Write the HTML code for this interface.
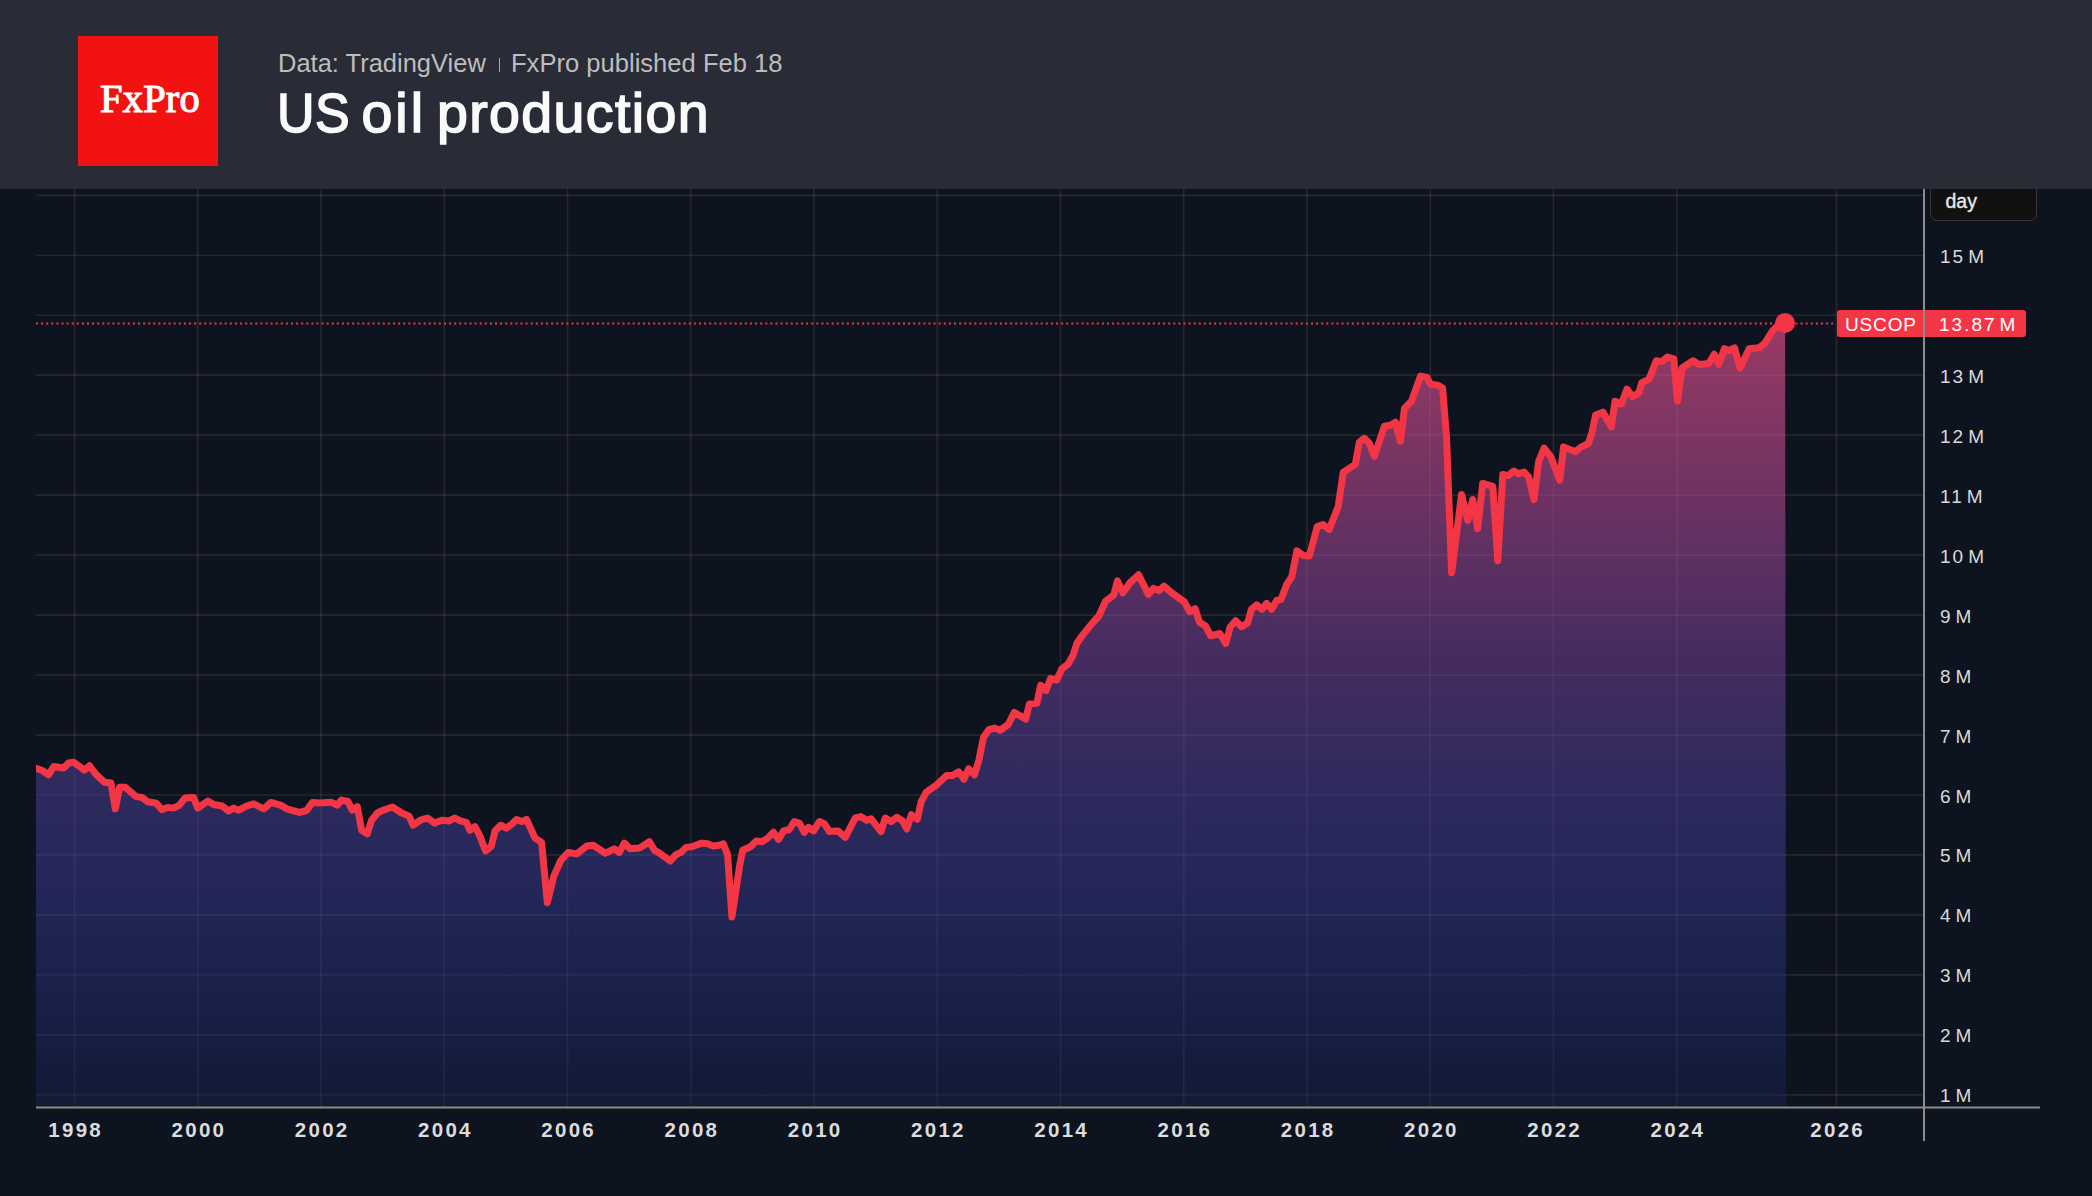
<!DOCTYPE html>
<html><head><meta charset="utf-8">
<style>
html,body{margin:0;padding:0;}
body{width:2092px;height:1196px;overflow:hidden;background:#0e1320;position:relative;font-family:"Liberation Sans",sans-serif;}
#hdr{position:absolute;left:0;top:0;width:2092px;height:189px;background:#292b36;z-index:5;}
#logo{position:absolute;left:78px;top:36px;width:140px;height:129.5px;background:#f21212;}
#logo span{position:absolute;left:2px;top:-2.5px;width:140px;text-align:center;font-family:"Liberation Serif",serif;font-weight:normal;font-size:40.5px;line-height:129px;color:#fff;letter-spacing:0.2px;-webkit-text-stroke:1.1px #fff;}
#sub{position:absolute;left:278px;top:45.9px;font-size:26.5px;line-height:34px;color:#bdbdbd;white-space:nowrap;transform-origin:0 0;transform:scaleX(0.962);}
#sep{position:absolute;left:498.6px;top:58px;width:1.6px;height:13.5px;background:#a8a8a8;}
#sub2{position:absolute;left:511px;top:45.9px;font-size:26.5px;line-height:34px;color:#bdbdbd;white-space:nowrap;transform-origin:0 0;transform:scaleX(0.965);}
#title{position:absolute;left:277px;top:80.8px;font-size:55.5px;line-height:64px;color:#fafafa;white-space:nowrap;-webkit-text-stroke:1.6px #fafafa;letter-spacing:0.55px;}
.w{position:absolute;top:0;transform-origin:0 0;}
svg{position:absolute;left:0;top:0;}
#vax{position:absolute;left:1922.8px;top:188px;width:2px;height:953px;background:#8e8c88;}
.yl{position:absolute;left:1940px;height:22px;line-height:22px;font-size:19px;color:#d9d9d9;white-space:nowrap;letter-spacing:2px;}
.sp{display:inline-block;width:3px;}
.xl{position:absolute;top:1116px;width:80px;text-align:center;font-size:20.5px;line-height:28px;font-weight:bold;color:#dcdcdc;letter-spacing:2.3px;text-indent:2.3px;}
#day{position:absolute;left:1929.5px;top:168px;width:107px;height:53px;background:#111111;border:1.5px solid #38383a;border-radius:7px;box-sizing:border-box;}
#dayt{position:absolute;left:1945.5px;top:188.5px;font-size:19.5px;line-height:24px;color:#e8e8e8;-webkit-text-stroke:0.35px #e8e8e8;}
.lab{position:absolute;top:310px;height:27px;line-height:29px;background:#f23645;color:#fff;font-size:19px;white-space:nowrap;letter-spacing:1.5px;}
</style></head><body>
<svg width="2092" height="1196" viewBox="0 0 2092 1196">
<defs>
<linearGradient id="g" x1="0" y1="323" x2="0" y2="1107" gradientUnits="userSpaceOnUse">
<stop offset="0" stop-color="#9a3a64"/>
<stop offset="0.22" stop-color="#6e3262"/>
<stop offset="0.42" stop-color="#462c60"/>
<stop offset="0.6" stop-color="#2e2a5e"/>
<stop offset="0.7" stop-color="#252759"/>
<stop offset="0.8" stop-color="#1c2350"/>
<stop offset="0.9" stop-color="#161e43"/>
<stop offset="1" stop-color="#121a35"/>
</linearGradient>
<clipPath id="ca"><path d="M36 768.4 L42.9 770.8 L48.6 774.8 L53.7 766.5 L63.7 768 L68.7 763 L73.7 762.2 L84.5 770.1 L89.5 765.8 L96 774.4 L104.6 782.3 L111 783 L115.3 808.8 L119.6 787.3 L125.4 787.3 L136.1 796.6 L141.9 797.4 L147.6 801.7 L156.2 803.1 L161.9 809.6 L167.7 807.4 L173.4 808.1 L179.2 805.3 L184.9 798.1 L193.5 797.4 L197.8 808.1 L207.8 801 L213.6 804.5 L222.2 806 L228.6 811 L233.6 808.1 L238.7 810.3 L246.5 806 L253.7 803.8 L263.8 808.8 L270.9 802.4 L281 805.3 L286.7 808.8 L299.6 812.4 L306.8 810.3 L312.5 802.4 L319.7 803.1 L331.5 802.3 L337.2 805.1 L341.5 800.1 L348 801.5 L352.3 810.2 L357.3 806.6 L361.6 830.2 L367.3 833.8 L371.6 820.2 L377.4 813 L383.1 810.2 L392.4 807 L401.7 813 L408.9 815.9 L413.2 825.2 L420.4 820.2 L427.6 818 L434.7 823.1 L441.9 820.2 L449.1 820.9 L454.8 818 L460.5 820.9 L466.3 822.3 L469.9 830.2 L474.9 826.6 L479.9 836 L485.6 851 L491.4 846 L495 831 L500.7 825.2 L506.4 828.1 L512.2 823.8 L516.5 819.5 L522.2 821.6 L526.5 819.5 L535.1 838.1 L541.6 842.4 L547.3 902.7 L553.8 876.1 L560.9 860.3 L568.1 852.5 L576.7 853.9 L586.7 846 L593.2 845.3 L605.4 853.2 L614.3 848.8 L619.3 852.4 L624.3 843.1 L630.1 848.8 L639.4 848.1 L649.4 841.7 L654.5 850.3 L659.5 853.1 L670.2 861 L676 854.6 L681 852.4 L686 847.4 L691.7 846.7 L701.8 843.1 L707.5 843.8 L713.3 846 L719 845.3 L723.3 843.8 L727.6 854.6 L731.9 917 L736.2 889 L739.8 864.6 L742.7 850.3 L750.5 846.7 L756.3 841 L762 841.7 L767.7 838.1 L773.5 832.3 L778.5 839.5 L783.5 830.9 L789.3 829.5 L794.3 821.6 L799.3 823 L804.3 832.3 L808.6 827.3 L813.6 830.9 L819.4 821.6 L824.4 823.7 L829.4 831.6 L838 830.9 L845.2 837.4 L855.2 818 L861 816.6 L866.7 820.2 L871 818.7 L881 831.6 L885.3 818 L891.1 821.6 L896.8 817.3 L902.6 820.9 L906.8 829 L911.3 814.7 L917.3 819.2 L921.1 801.9 L926.3 792.1 L936.1 785.3 L946.6 775.5 L952.7 775.5 L958.7 771.8 L963.9 779.3 L968.5 768.8 L974.5 774.8 L979 759.7 L983.5 737.2 L988.8 729.7 L994.8 728.1 L1000.1 730.4 L1008.3 724.4 L1014.4 712.4 L1025.6 719.1 L1029.4 704.1 L1036.9 703.3 L1040.7 685.3 L1046 690.5 L1050.5 678.6 L1056.6 680.2 L1061.8 668.9 L1067.8 664.4 L1073.1 655.3 L1076.9 643.3 L1082.1 635.8 L1091.9 623.7 L1098.7 616.2 L1105.5 601.2 L1113.7 595.1 L1117.5 580.8 L1122.8 592.9 L1130.3 582.4 L1138.6 574.8 L1148.3 594.4 L1153.6 588.4 L1158.9 590.6 L1164.1 586.1 L1170.9 592.1 L1184.4 601.9 L1189.7 611.7 L1195 608.7 L1199.5 622.2 L1205.5 626 L1210.8 635.8 L1219.8 633.5 L1225.8 643.3 L1230.3 626.7 L1235.6 620.7 L1241.6 626.7 L1247.6 623 L1251.4 609.4 L1256.7 604.9 L1261.9 609.4 L1266.5 603.4 L1271.7 609.4 L1276.8 600.2 L1281 599.4 L1286.8 584.3 L1291.8 576.8 L1296.9 550.9 L1303.5 555.5 L1309.4 555.9 L1317.2 526.6 L1323.2 524.6 L1329.2 529.6 L1338.2 506.5 L1343.2 472.4 L1355.3 464.4 L1359.3 442.3 L1364.3 438.3 L1369.3 443.3 L1374.4 456.3 L1384.4 426.2 L1390.4 425.2 L1395.4 422.2 L1400.4 441.3 L1404.5 408.2 L1411.5 401.1 L1420.5 376.1 L1426.5 377.1 L1430.5 384.1 L1437.6 385.1 L1442.6 388.1 L1446.6 438.3 L1451.6 572.7 L1461.6 494.5 L1467.7 520.5 L1472.7 499.5 L1477.7 528.6 L1482.7 483.4 L1492.8 486.4 L1497.8 560.7 L1502.8 474.4 L1508.3 475.6 L1513.8 471 L1518.4 473.8 L1523.9 472 L1528.5 476.6 L1534 499.6 L1538.6 461.9 L1544.1 448.1 L1550.6 456.3 L1559.8 480.2 L1563.5 447.1 L1575.4 451.7 L1580.9 447.1 L1588.3 443.5 L1592 432.4 L1595.6 415 L1603 412.2 L1611.3 426.9 L1615 401.2 L1621.4 403.9 L1626.9 389.2 L1632.4 396.6 L1638.9 392.9 L1641.6 382.8 L1649 379.1 L1656.3 360.7 L1661.9 361.6 L1667.4 357 L1673.8 358.9 L1677.5 401.2 L1682.1 368 L1693.1 360.7 L1698.6 364.4 L1708.8 363.5 L1714.3 354.3 L1718.9 364.4 L1724.4 348.7 L1729 350.6 L1734.5 347.8 L1740 368 L1749.2 348.7 L1759.3 347.8 L1764.9 343.2 L1772.2 331.3 L1777.7 325.7 L1785.1 323 L1786 1107 L36 1107 Z"/></clipPath>
<clipPath id="c"><rect x="36" y="188" width="1900" height="920"/></clipPath>
</defs>
<g stroke="rgba(220,185,110,0.12)" stroke-width="1.7" fill="none">
<line x1="36" y1="195.30" x2="1924" y2="195.30"/>
<line x1="36" y1="255.27" x2="1924" y2="255.27"/>
<line x1="36" y1="315.24" x2="1924" y2="315.24"/>
<line x1="36" y1="375.21" x2="1924" y2="375.21"/>
<line x1="36" y1="435.18" x2="1924" y2="435.18"/>
<line x1="36" y1="495.15" x2="1924" y2="495.15"/>
<line x1="36" y1="555.12" x2="1924" y2="555.12"/>
<line x1="36" y1="615.09" x2="1924" y2="615.09"/>
<line x1="36" y1="675.06" x2="1924" y2="675.06"/>
<line x1="36" y1="735.03" x2="1924" y2="735.03"/>
<line x1="36" y1="795.00" x2="1924" y2="795.00"/>
<line x1="36" y1="854.97" x2="1924" y2="854.97"/>
<line x1="36" y1="914.94" x2="1924" y2="914.94"/>
<line x1="36" y1="974.91" x2="1924" y2="974.91"/>
<line x1="36" y1="1034.88" x2="1924" y2="1034.88"/>
<line x1="36" y1="1094.85" x2="1924" y2="1094.85"/>
<line x1="74.50" y1="188" x2="74.50" y2="1107"/>
<line x1="197.75" y1="188" x2="197.75" y2="1107"/>
<line x1="321.00" y1="188" x2="321.00" y2="1107"/>
<line x1="444.25" y1="188" x2="444.25" y2="1107"/>
<line x1="567.50" y1="188" x2="567.50" y2="1107"/>
<line x1="690.75" y1="188" x2="690.75" y2="1107"/>
<line x1="814.00" y1="188" x2="814.00" y2="1107"/>
<line x1="937.25" y1="188" x2="937.25" y2="1107"/>
<line x1="1060.50" y1="188" x2="1060.50" y2="1107"/>
<line x1="1183.75" y1="188" x2="1183.75" y2="1107"/>
<line x1="1307.00" y1="188" x2="1307.00" y2="1107"/>
<line x1="1430.25" y1="188" x2="1430.25" y2="1107"/>
<line x1="1553.50" y1="188" x2="1553.50" y2="1107"/>
<line x1="1676.75" y1="188" x2="1676.75" y2="1107"/>
<line x1="1836.50" y1="188" x2="1836.50" y2="1107"/>
</g>
<path d="M36 768.4 L42.9 770.8 L48.6 774.8 L53.7 766.5 L63.7 768 L68.7 763 L73.7 762.2 L84.5 770.1 L89.5 765.8 L96 774.4 L104.6 782.3 L111 783 L115.3 808.8 L119.6 787.3 L125.4 787.3 L136.1 796.6 L141.9 797.4 L147.6 801.7 L156.2 803.1 L161.9 809.6 L167.7 807.4 L173.4 808.1 L179.2 805.3 L184.9 798.1 L193.5 797.4 L197.8 808.1 L207.8 801 L213.6 804.5 L222.2 806 L228.6 811 L233.6 808.1 L238.7 810.3 L246.5 806 L253.7 803.8 L263.8 808.8 L270.9 802.4 L281 805.3 L286.7 808.8 L299.6 812.4 L306.8 810.3 L312.5 802.4 L319.7 803.1 L331.5 802.3 L337.2 805.1 L341.5 800.1 L348 801.5 L352.3 810.2 L357.3 806.6 L361.6 830.2 L367.3 833.8 L371.6 820.2 L377.4 813 L383.1 810.2 L392.4 807 L401.7 813 L408.9 815.9 L413.2 825.2 L420.4 820.2 L427.6 818 L434.7 823.1 L441.9 820.2 L449.1 820.9 L454.8 818 L460.5 820.9 L466.3 822.3 L469.9 830.2 L474.9 826.6 L479.9 836 L485.6 851 L491.4 846 L495 831 L500.7 825.2 L506.4 828.1 L512.2 823.8 L516.5 819.5 L522.2 821.6 L526.5 819.5 L535.1 838.1 L541.6 842.4 L547.3 902.7 L553.8 876.1 L560.9 860.3 L568.1 852.5 L576.7 853.9 L586.7 846 L593.2 845.3 L605.4 853.2 L614.3 848.8 L619.3 852.4 L624.3 843.1 L630.1 848.8 L639.4 848.1 L649.4 841.7 L654.5 850.3 L659.5 853.1 L670.2 861 L676 854.6 L681 852.4 L686 847.4 L691.7 846.7 L701.8 843.1 L707.5 843.8 L713.3 846 L719 845.3 L723.3 843.8 L727.6 854.6 L731.9 917 L736.2 889 L739.8 864.6 L742.7 850.3 L750.5 846.7 L756.3 841 L762 841.7 L767.7 838.1 L773.5 832.3 L778.5 839.5 L783.5 830.9 L789.3 829.5 L794.3 821.6 L799.3 823 L804.3 832.3 L808.6 827.3 L813.6 830.9 L819.4 821.6 L824.4 823.7 L829.4 831.6 L838 830.9 L845.2 837.4 L855.2 818 L861 816.6 L866.7 820.2 L871 818.7 L881 831.6 L885.3 818 L891.1 821.6 L896.8 817.3 L902.6 820.9 L906.8 829 L911.3 814.7 L917.3 819.2 L921.1 801.9 L926.3 792.1 L936.1 785.3 L946.6 775.5 L952.7 775.5 L958.7 771.8 L963.9 779.3 L968.5 768.8 L974.5 774.8 L979 759.7 L983.5 737.2 L988.8 729.7 L994.8 728.1 L1000.1 730.4 L1008.3 724.4 L1014.4 712.4 L1025.6 719.1 L1029.4 704.1 L1036.9 703.3 L1040.7 685.3 L1046 690.5 L1050.5 678.6 L1056.6 680.2 L1061.8 668.9 L1067.8 664.4 L1073.1 655.3 L1076.9 643.3 L1082.1 635.8 L1091.9 623.7 L1098.7 616.2 L1105.5 601.2 L1113.7 595.1 L1117.5 580.8 L1122.8 592.9 L1130.3 582.4 L1138.6 574.8 L1148.3 594.4 L1153.6 588.4 L1158.9 590.6 L1164.1 586.1 L1170.9 592.1 L1184.4 601.9 L1189.7 611.7 L1195 608.7 L1199.5 622.2 L1205.5 626 L1210.8 635.8 L1219.8 633.5 L1225.8 643.3 L1230.3 626.7 L1235.6 620.7 L1241.6 626.7 L1247.6 623 L1251.4 609.4 L1256.7 604.9 L1261.9 609.4 L1266.5 603.4 L1271.7 609.4 L1276.8 600.2 L1281 599.4 L1286.8 584.3 L1291.8 576.8 L1296.9 550.9 L1303.5 555.5 L1309.4 555.9 L1317.2 526.6 L1323.2 524.6 L1329.2 529.6 L1338.2 506.5 L1343.2 472.4 L1355.3 464.4 L1359.3 442.3 L1364.3 438.3 L1369.3 443.3 L1374.4 456.3 L1384.4 426.2 L1390.4 425.2 L1395.4 422.2 L1400.4 441.3 L1404.5 408.2 L1411.5 401.1 L1420.5 376.1 L1426.5 377.1 L1430.5 384.1 L1437.6 385.1 L1442.6 388.1 L1446.6 438.3 L1451.6 572.7 L1461.6 494.5 L1467.7 520.5 L1472.7 499.5 L1477.7 528.6 L1482.7 483.4 L1492.8 486.4 L1497.8 560.7 L1502.8 474.4 L1508.3 475.6 L1513.8 471 L1518.4 473.8 L1523.9 472 L1528.5 476.6 L1534 499.6 L1538.6 461.9 L1544.1 448.1 L1550.6 456.3 L1559.8 480.2 L1563.5 447.1 L1575.4 451.7 L1580.9 447.1 L1588.3 443.5 L1592 432.4 L1595.6 415 L1603 412.2 L1611.3 426.9 L1615 401.2 L1621.4 403.9 L1626.9 389.2 L1632.4 396.6 L1638.9 392.9 L1641.6 382.8 L1649 379.1 L1656.3 360.7 L1661.9 361.6 L1667.4 357 L1673.8 358.9 L1677.5 401.2 L1682.1 368 L1693.1 360.7 L1698.6 364.4 L1708.8 363.5 L1714.3 354.3 L1718.9 364.4 L1724.4 348.7 L1729 350.6 L1734.5 347.8 L1740 368 L1749.2 348.7 L1759.3 347.8 L1764.9 343.2 L1772.2 331.3 L1777.7 325.7 L1785.1 323 L1786 1107 L36 1107 Z" fill="url(#g)"/>
<g stroke="rgba(210,190,200,0.075)" stroke-width="1.7" fill="none" clip-path="url(#ca)">
<line x1="36" y1="195.30" x2="1924" y2="195.30"/>
<line x1="36" y1="255.27" x2="1924" y2="255.27"/>
<line x1="36" y1="315.24" x2="1924" y2="315.24"/>
<line x1="36" y1="375.21" x2="1924" y2="375.21"/>
<line x1="36" y1="435.18" x2="1924" y2="435.18"/>
<line x1="36" y1="495.15" x2="1924" y2="495.15"/>
<line x1="36" y1="555.12" x2="1924" y2="555.12"/>
<line x1="36" y1="615.09" x2="1924" y2="615.09"/>
<line x1="36" y1="675.06" x2="1924" y2="675.06"/>
<line x1="36" y1="735.03" x2="1924" y2="735.03"/>
<line x1="36" y1="795.00" x2="1924" y2="795.00"/>
<line x1="36" y1="854.97" x2="1924" y2="854.97"/>
<line x1="36" y1="914.94" x2="1924" y2="914.94"/>
<line x1="36" y1="974.91" x2="1924" y2="974.91"/>
<line x1="36" y1="1034.88" x2="1924" y2="1034.88"/>
<line x1="36" y1="1094.85" x2="1924" y2="1094.85"/>
<line x1="74.50" y1="188" x2="74.50" y2="1107"/>
<line x1="197.75" y1="188" x2="197.75" y2="1107"/>
<line x1="321.00" y1="188" x2="321.00" y2="1107"/>
<line x1="444.25" y1="188" x2="444.25" y2="1107"/>
<line x1="567.50" y1="188" x2="567.50" y2="1107"/>
<line x1="690.75" y1="188" x2="690.75" y2="1107"/>
<line x1="814.00" y1="188" x2="814.00" y2="1107"/>
<line x1="937.25" y1="188" x2="937.25" y2="1107"/>
<line x1="1060.50" y1="188" x2="1060.50" y2="1107"/>
<line x1="1183.75" y1="188" x2="1183.75" y2="1107"/>
<line x1="1307.00" y1="188" x2="1307.00" y2="1107"/>
<line x1="1430.25" y1="188" x2="1430.25" y2="1107"/>
<line x1="1553.50" y1="188" x2="1553.50" y2="1107"/>
<line x1="1676.75" y1="188" x2="1676.75" y2="1107"/>
<line x1="1836.50" y1="188" x2="1836.50" y2="1107"/>
</g>
<line x1="36" y1="323.5" x2="1836" y2="323.5" stroke="#f23645" stroke-width="2" stroke-dasharray="2 3.1"/>
<path d="M36 768.4 L42.9 770.8 L48.6 774.8 L53.7 766.5 L63.7 768 L68.7 763 L73.7 762.2 L84.5 770.1 L89.5 765.8 L96 774.4 L104.6 782.3 L111 783 L115.3 808.8 L119.6 787.3 L125.4 787.3 L136.1 796.6 L141.9 797.4 L147.6 801.7 L156.2 803.1 L161.9 809.6 L167.7 807.4 L173.4 808.1 L179.2 805.3 L184.9 798.1 L193.5 797.4 L197.8 808.1 L207.8 801 L213.6 804.5 L222.2 806 L228.6 811 L233.6 808.1 L238.7 810.3 L246.5 806 L253.7 803.8 L263.8 808.8 L270.9 802.4 L281 805.3 L286.7 808.8 L299.6 812.4 L306.8 810.3 L312.5 802.4 L319.7 803.1 L331.5 802.3 L337.2 805.1 L341.5 800.1 L348 801.5 L352.3 810.2 L357.3 806.6 L361.6 830.2 L367.3 833.8 L371.6 820.2 L377.4 813 L383.1 810.2 L392.4 807 L401.7 813 L408.9 815.9 L413.2 825.2 L420.4 820.2 L427.6 818 L434.7 823.1 L441.9 820.2 L449.1 820.9 L454.8 818 L460.5 820.9 L466.3 822.3 L469.9 830.2 L474.9 826.6 L479.9 836 L485.6 851 L491.4 846 L495 831 L500.7 825.2 L506.4 828.1 L512.2 823.8 L516.5 819.5 L522.2 821.6 L526.5 819.5 L535.1 838.1 L541.6 842.4 L547.3 902.7 L553.8 876.1 L560.9 860.3 L568.1 852.5 L576.7 853.9 L586.7 846 L593.2 845.3 L605.4 853.2 L614.3 848.8 L619.3 852.4 L624.3 843.1 L630.1 848.8 L639.4 848.1 L649.4 841.7 L654.5 850.3 L659.5 853.1 L670.2 861 L676 854.6 L681 852.4 L686 847.4 L691.7 846.7 L701.8 843.1 L707.5 843.8 L713.3 846 L719 845.3 L723.3 843.8 L727.6 854.6 L731.9 917 L736.2 889 L739.8 864.6 L742.7 850.3 L750.5 846.7 L756.3 841 L762 841.7 L767.7 838.1 L773.5 832.3 L778.5 839.5 L783.5 830.9 L789.3 829.5 L794.3 821.6 L799.3 823 L804.3 832.3 L808.6 827.3 L813.6 830.9 L819.4 821.6 L824.4 823.7 L829.4 831.6 L838 830.9 L845.2 837.4 L855.2 818 L861 816.6 L866.7 820.2 L871 818.7 L881 831.6 L885.3 818 L891.1 821.6 L896.8 817.3 L902.6 820.9 L906.8 829 L911.3 814.7 L917.3 819.2 L921.1 801.9 L926.3 792.1 L936.1 785.3 L946.6 775.5 L952.7 775.5 L958.7 771.8 L963.9 779.3 L968.5 768.8 L974.5 774.8 L979 759.7 L983.5 737.2 L988.8 729.7 L994.8 728.1 L1000.1 730.4 L1008.3 724.4 L1014.4 712.4 L1025.6 719.1 L1029.4 704.1 L1036.9 703.3 L1040.7 685.3 L1046 690.5 L1050.5 678.6 L1056.6 680.2 L1061.8 668.9 L1067.8 664.4 L1073.1 655.3 L1076.9 643.3 L1082.1 635.8 L1091.9 623.7 L1098.7 616.2 L1105.5 601.2 L1113.7 595.1 L1117.5 580.8 L1122.8 592.9 L1130.3 582.4 L1138.6 574.8 L1148.3 594.4 L1153.6 588.4 L1158.9 590.6 L1164.1 586.1 L1170.9 592.1 L1184.4 601.9 L1189.7 611.7 L1195 608.7 L1199.5 622.2 L1205.5 626 L1210.8 635.8 L1219.8 633.5 L1225.8 643.3 L1230.3 626.7 L1235.6 620.7 L1241.6 626.7 L1247.6 623 L1251.4 609.4 L1256.7 604.9 L1261.9 609.4 L1266.5 603.4 L1271.7 609.4 L1276.8 600.2 L1281 599.4 L1286.8 584.3 L1291.8 576.8 L1296.9 550.9 L1303.5 555.5 L1309.4 555.9 L1317.2 526.6 L1323.2 524.6 L1329.2 529.6 L1338.2 506.5 L1343.2 472.4 L1355.3 464.4 L1359.3 442.3 L1364.3 438.3 L1369.3 443.3 L1374.4 456.3 L1384.4 426.2 L1390.4 425.2 L1395.4 422.2 L1400.4 441.3 L1404.5 408.2 L1411.5 401.1 L1420.5 376.1 L1426.5 377.1 L1430.5 384.1 L1437.6 385.1 L1442.6 388.1 L1446.6 438.3 L1451.6 572.7 L1461.6 494.5 L1467.7 520.5 L1472.7 499.5 L1477.7 528.6 L1482.7 483.4 L1492.8 486.4 L1497.8 560.7 L1502.8 474.4 L1508.3 475.6 L1513.8 471 L1518.4 473.8 L1523.9 472 L1528.5 476.6 L1534 499.6 L1538.6 461.9 L1544.1 448.1 L1550.6 456.3 L1559.8 480.2 L1563.5 447.1 L1575.4 451.7 L1580.9 447.1 L1588.3 443.5 L1592 432.4 L1595.6 415 L1603 412.2 L1611.3 426.9 L1615 401.2 L1621.4 403.9 L1626.9 389.2 L1632.4 396.6 L1638.9 392.9 L1641.6 382.8 L1649 379.1 L1656.3 360.7 L1661.9 361.6 L1667.4 357 L1673.8 358.9 L1677.5 401.2 L1682.1 368 L1693.1 360.7 L1698.6 364.4 L1708.8 363.5 L1714.3 354.3 L1718.9 364.4 L1724.4 348.7 L1729 350.6 L1734.5 347.8 L1740 368 L1749.2 348.7 L1759.3 347.8 L1764.9 343.2 L1772.2 331.3 L1777.7 325.7 L1785.1 323" fill="none" stroke="#f23645" stroke-width="7" stroke-linejoin="round" stroke-linecap="round" clip-path="url(#c)"/>
<circle cx="1785" cy="323" r="10" fill="#f23645"/>
<line x1="36" y1="1107.6" x2="2040" y2="1107.6" stroke="#8e8b88" stroke-width="2"/>
</svg>
<div class="yl" style="top:245.7px">15<span class="sp"></span>M</div>
<div class="yl" style="top:305.7px">14<span class="sp"></span>M</div>
<div class="yl" style="top:365.7px">13<span class="sp"></span>M</div>
<div class="yl" style="top:425.6px">12<span class="sp"></span>M</div>
<div class="yl" style="top:485.6px">11<span class="sp"></span>M</div>
<div class="yl" style="top:545.6px">10<span class="sp"></span>M</div>
<div class="yl" style="top:605.5px">9<span class="sp"></span>M</div>
<div class="yl" style="top:665.5px">8<span class="sp"></span>M</div>
<div class="yl" style="top:725.5px">7<span class="sp"></span>M</div>
<div class="yl" style="top:785.5px">6<span class="sp"></span>M</div>
<div class="yl" style="top:845.4px">5<span class="sp"></span>M</div>
<div class="yl" style="top:905.4px">4<span class="sp"></span>M</div>
<div class="yl" style="top:965.4px">3<span class="sp"></span>M</div>
<div class="yl" style="top:1025.3px">2<span class="sp"></span>M</div>
<div class="yl" style="top:1085.3px">1<span class="sp"></span>M</div>
<div class="xl" style="left:34.50px">1998</div>
<div class="xl" style="left:157.75px">2000</div>
<div class="xl" style="left:281.00px">2002</div>
<div class="xl" style="left:404.25px">2004</div>
<div class="xl" style="left:527.50px">2006</div>
<div class="xl" style="left:650.75px">2008</div>
<div class="xl" style="left:774.00px">2010</div>
<div class="xl" style="left:897.25px">2012</div>
<div class="xl" style="left:1020.50px">2014</div>
<div class="xl" style="left:1143.75px">2016</div>
<div class="xl" style="left:1267.00px">2018</div>
<div class="xl" style="left:1390.25px">2020</div>
<div class="xl" style="left:1513.50px">2022</div>
<div class="xl" style="left:1636.75px">2024</div>
<div class="xl" style="left:1796.50px">2026</div>
<div id="day"></div>
<div id="dayt">day</div>
<div class="lab" style="left:1837px;width:86px;border-radius:3px 0 0 3px;padding-left:8px;box-sizing:border-box;letter-spacing:0.85px;">USCOP</div>
<div class="lab" style="left:1924px;width:102px;border-radius:0 3px 3px 0;padding-left:15px;box-sizing:border-box;letter-spacing:2px;">13.87<span class="sp"></span>M</div>
<div id="vax"></div>
<div id="hdr">
<div id="logo"><span>FxPro</span></div>
<div id="sub">Data: TradingView</div>
<div id="sep"></div>
<div id="sub2">FxPro published Feb 18</div>
<div id="title"><span class="w" style="left:0px;transform:scaleX(0.937)">US</span><span class="w" style="left:84.5px;letter-spacing:3px">oil</span><span class="w" style="left:160px;letter-spacing:1.37px">production</span></div>
</div>
</body></html>
